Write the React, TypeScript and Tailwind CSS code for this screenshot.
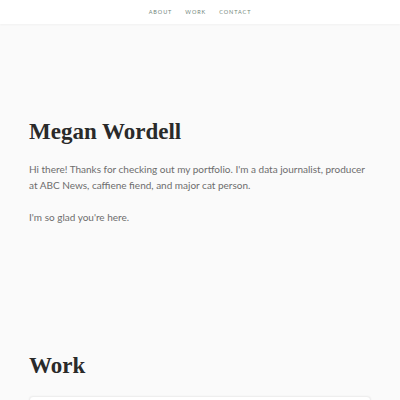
export default function App() {
  return (
    <main className="min-h-screen bg-[#fafafa] font-['Lato','Liberation_Sans',sans-serif]">
      {/* Nav */}
      <header className="h-6 bg-white flex items-center justify-center gap-[13px] shadow-[0_1px_2px_rgba(0,0,0,0.04)]">
        <a className="text-[5.5px] tracking-[0.17em] text-[#71867a]">ABOUT</a>
        <a className="text-[5.5px] tracking-[0.17em] text-[#71867a]">WORK</a>
        <a className="text-[5.5px] tracking-[0.17em] text-[#71867a]">CONTACT</a>
      </header>

      {/* Intro */}
      <section className="px-[29px] pt-[96px]">
        <h1 className="font-['Liberation_Serif',serif] font-bold text-[23px] leading-none text-[#2a2a2a]">
          Megan Wordell
        </h1>
        <p className="mt-[18px] text-[10px] leading-[16px] text-[#6d6d6d]">
          Hi there! Thanks for checking out my portfolio. I'm a data journalist, producer at ABC News, caffiene fiend, and major cat person.
        </p>
        <p className="mt-4 text-[10px] leading-[16px] text-[#6d6d6d]">I'm so glad you're here.</p>
      </section>

      {/* Work */}
      <section className="px-[29px] pt-[129px]">
        <h2 className="font-['Liberation_Serif',serif] font-bold text-[23px] leading-none text-[#2a2a2a]">Work</h2>
        <div className="mt-[19px] h-24 bg-white border border-[#eeeeee] rounded-sm shadow-[0_0_2px_rgba(0,0,0,0.05)]" />
      </section>
    </main>
  )
}
